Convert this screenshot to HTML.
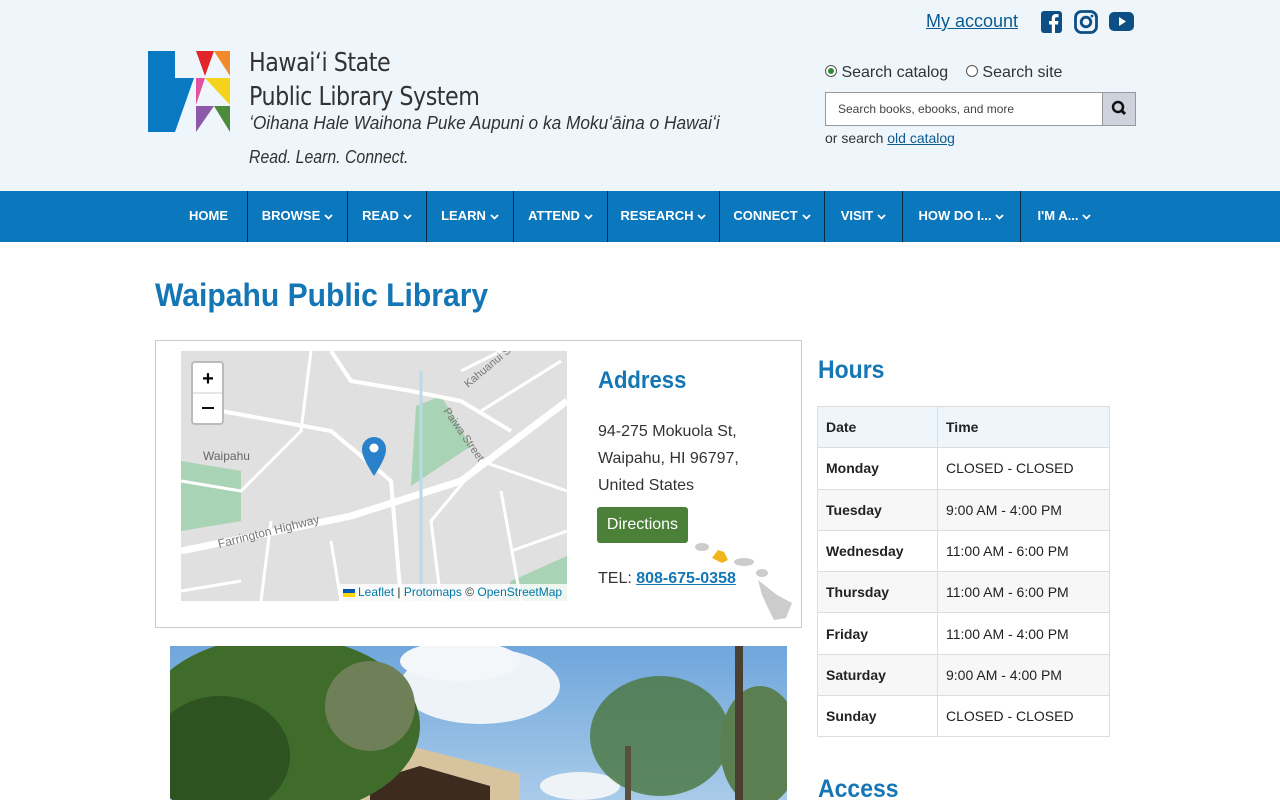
<!DOCTYPE html>
<html><head><meta charset="utf-8"><style>
*{margin:0;padding:0;box-sizing:border-box}
body{width:1280px;height:800px;overflow:hidden;font-family:"Liberation Sans",sans-serif;background:#fff;position:relative;color:#222}
.a{position:absolute}
#hdr{left:0;top:0;width:1280px;height:191px;background:#eef6fb}
#nav{left:0;top:191px;width:1280px;height:51px;background:#0b77bd}
.ni{position:absolute;top:0;height:51px;line-height:49px;color:#fff;font-weight:bold;font-size:13px;text-align:center;border-left:1px solid #0a2a44}
.ni svg{vertical-align:middle;margin-left:4px}
table{border-collapse:collapse;font-size:14px}
td{border:1px solid #ddd;height:41.3px;padding:0 8px}
.h{font-weight:bold;color:#1576b6;transform-origin:0 0;white-space:nowrap}
</style></head><body>
<div id="hdr" class="a"></div>
<svg class="a" style="left:148px;top:51px" width="82" height="82" viewBox="0 0 82 82">
<path d="M0 0H27V27H46L27 81H0Z" fill="#0a79c4"/>
<path d="M48 0H66L57 25Z" fill="#e2242b"/><path d="M66 0H82V25Z" fill="#f08a2a"/>
<path d="M57 27L48 27 48 54Z" fill="#e3529e"/><path d="M57 27H82V54Z" fill="#f3d31b"/>
<path d="M48 55H66L48 81Z" fill="#8c5aa6"/><path d="M66 55H82V81Z" fill="#4d8b3c"/>
</svg>
<div class="a" style="left:249px;top:46px;font-size:26px;line-height:34px;color:#333;font-family:'DejaVu Sans Condensed',sans-serif;letter-spacing:-0.5px;transform:scaleX(0.95);transform-origin:0 0;white-space:nowrap">Hawaiʻi State<br>Public Library System</div>
<div class="a" style="left:249px;top:113px;font-size:18px;font-style:italic;color:#333;transform:scaleX(0.96);transform-origin:0 0;white-space:nowrap">ʻOihana Hale Waihona Puke Aupuni o ka Mokuʻāina o Hawaiʻi</div>
<div class="a" style="left:249px;top:147px;font-size:18px;font-style:italic;color:#333;transform:scaleX(0.88);transform-origin:0 0">Read. Learn. Connect.</div>
<div class="a" style="left:926px;top:11px;font-size:18px;color:#0b5a92;text-decoration:underline">My account</div>
<svg class="a" style="left:1041px;top:11px" width="22" height="22"><rect width="21" height="22" rx="3" fill="#0d4f84"/><path d="M14 22V13.5H17L17.4 10H14V8C14 7 14.3 6.3 15.8 6.3H17.5V3.2C17.2 3.2 16.2 3 15 3 12.5 3 10.8 4.5 10.8 7.3V10H8V13.5H10.8V22Z" fill="#fff"/></svg>
<svg class="a" style="left:1074px;top:10px" width="24" height="24"><rect x="1.5" y="1.5" width="21" height="21" rx="6" fill="none" stroke="#0d4f84" stroke-width="2.8"/><circle cx="12" cy="12" r="4.8" fill="none" stroke="#0d4f84" stroke-width="2.8"/><circle cx="18" cy="6" r="1.4" fill="#0d4f84"/></svg>
<svg class="a" style="left:1109px;top:12px" width="25" height="20"><rect width="25" height="19" rx="5" fill="#0d4f84"/><path d="M10 5V14L17 9.5Z" fill="#fff"/></svg>
<div class="a" style="left:825px;top:64px;font-size:16px;color:#333"><span style="display:inline-block;width:12px;height:12px;border:1px solid #555;border-radius:50%;vertical-align:0px;position:relative;background:#fff"><span style="position:absolute;left:2px;top:2px;width:6px;height:6px;border-radius:50%;background:#2f8a3a"></span></span> Search catalog &nbsp;&nbsp;&nbsp;<span style="display:inline-block;width:12px;height:12px;border:1px solid #555;border-radius:50%;vertical-align:0px;background:#fff"></span> Search site</div>
<div class="a" style="left:825px;top:92px;width:311px;height:34px;border:1px solid #999;background:#fff"><span style="position:absolute;left:12px;top:9px;font-size:12px;color:#444">Search books, ebooks, and more</span>
<div style="position:absolute;right:0;top:0;width:33px;height:32px;background:#cdd2dd;border-left:1px solid #999"><svg width="33" height="32"><circle cx="15" cy="14" r="5" fill="none" stroke="#111" stroke-width="2.5"/><path d="M18.5 17.5L22 21" stroke="#111" stroke-width="3"/></svg></div></div>
<div class="a" style="left:825px;top:130px;font-size:14px;color:#333">or search <span style="color:#0b5a92;text-decoration:underline">old catalog</span></div>
<div id="nav" class="a">
<div class="ni" style="left:170px;width:77px;border:none">HOME</div>
<div class="ni" style="left:247px;width:100px">BROWSE<svg width="9" height="6"><path d="M1 1L4.5 4.5 8 1" stroke="#fff" stroke-width="1.8" fill="none"/></svg></div>
<div class="ni" style="left:347px;width:79px">READ<svg width="9" height="6"><path d="M1 1L4.5 4.5 8 1" stroke="#fff" stroke-width="1.8" fill="none"/></svg></div>
<div class="ni" style="left:426px;width:87px">LEARN<svg width="9" height="6"><path d="M1 1L4.5 4.5 8 1" stroke="#fff" stroke-width="1.8" fill="none"/></svg></div>
<div class="ni" style="left:513px;width:94px">ATTEND<svg width="9" height="6"><path d="M1 1L4.5 4.5 8 1" stroke="#fff" stroke-width="1.8" fill="none"/></svg></div>
<div class="ni" style="left:607px;width:112px">RESEARCH<svg width="9" height="6"><path d="M1 1L4.5 4.5 8 1" stroke="#fff" stroke-width="1.8" fill="none"/></svg></div>
<div class="ni" style="left:719px;width:105px">CONNECT<svg width="9" height="6"><path d="M1 1L4.5 4.5 8 1" stroke="#fff" stroke-width="1.8" fill="none"/></svg></div>
<div class="ni" style="left:824px;width:78px">VISIT<svg width="9" height="6"><path d="M1 1L4.5 4.5 8 1" stroke="#fff" stroke-width="1.8" fill="none"/></svg></div>
<div class="ni" style="left:902px;width:118px">HOW DO I...<svg width="9" height="6"><path d="M1 1L4.5 4.5 8 1" stroke="#fff" stroke-width="1.8" fill="none"/></svg></div>
<div class="ni" style="left:1020px;width:88px">I'M A...<svg width="9" height="6"><path d="M1 1L4.5 4.5 8 1" stroke="#fff" stroke-width="1.8" fill="none"/></svg></div>
</div>
<div class="a h" style="left:155px;top:277px;font-size:32px;transform:scaleX(0.94)">Waipahu Public Library</div>
<div class="a" style="left:155px;top:340px;width:647px;height:288px;border:1px solid #ccc"></div>
<svg class="a" style="left:181px;top:351px" width="386" height="250" viewBox="0 0 386 250">
<rect width="386" height="250" fill="#e0e0e0"/>
<path d="M0 110L0 180 60 170 60 120Z" fill="#a9d3b5"/>
<path d="M235 55L260 45 290 95 230 135Z" fill="#a9d3b5"/>
<path d="M330 230L386 205 386 250 320 250Z" fill="#a9d3b5"/>
<g stroke="#fff" fill="none">
<path d="M0 200L170 165 280 130 386 50" stroke-width="7"/>
<path d="M40 60L150 80 210 130 220 250" stroke-width="4"/>
<path d="M150 0L170 30 230 40 280 50 330 80" stroke-width="4"/>
<path d="M0 130L60 140 120 80 130 0" stroke-width="3"/>
<path d="M260 250L250 170 300 110 386 140" stroke-width="3"/>
<path d="M280 20L320 0M300 60L380 10M80 250L90 170M0 240L60 230M330 200L386 180M160 250L150 190M320 140L340 250" stroke-width="3"/>
</g>
<path d="M240 20V250" stroke="#b9dbe6" stroke-width="3"/>
<text x="22" y="109" font-size="12" fill="#666" font-family="Liberation Sans">Waipahu</text>
<text x="38" y="197" font-size="12" fill="#777" font-family="Liberation Sans" transform="rotate(-14 38 197)">Farrington Highway</text>
<text x="262" y="60" font-size="11" fill="#777" font-family="Liberation Sans" transform="rotate(55 262 60)">Paiwa Street</text>
<text x="287" y="37" font-size="11" fill="#777" font-family="Liberation Sans" transform="rotate(-40 287 37)">Kahuanui St</text>
<path d="M193 125C182 108 181 102 181 98A12 12 0 0 1 205 98C205 102 204 108 193 125Z" fill="#2a81cb"/>
<circle cx="193" cy="97" r="4.5" fill="#fff"/>
<rect x="11" y="11" width="31" height="62" rx="3" fill="#fff" stroke="#bbb" stroke-width="2"/>
<path d="M12 42H41" stroke="#ccc"/>
<text x="27" y="34" font-size="20" font-weight="bold" text-anchor="middle" font-family="Liberation Sans">+</text>
<path d="M21 57H33" stroke="#111" stroke-width="2"/>
<rect x="158" y="233" width="228" height="17" fill="rgba(255,255,255,0.8)"/>
<rect x="162" y="238" width="12" height="4" fill="#0057b7"/><rect x="162" y="242" width="12" height="4" fill="#ffd700"/>
<text x="177" y="245" font-size="12" fill="#0078a8" font-family="Liberation Sans">Leaflet <tspan fill="#333">|</tspan> Protomaps <tspan fill="#333">©</tspan> OpenStreetMap</text>
</svg>
<div class="a h" style="left:598px;top:367px;font-size:24px;transform:scaleX(0.92)">Address</div>
<div class="a" style="left:598px;top:418px;font-size:16px;line-height:27px;color:#333">94-275 Mokuola St,<br>Waipahu, HI 96797,<br>United States</div>
<svg class="a" style="left:682px;top:540px" width="112" height="82"><g fill="#ccc"><ellipse cx="20" cy="7" rx="7" ry="4"/><ellipse cx="62" cy="22" rx="10" ry="4"/><ellipse cx="80" cy="33" rx="6" ry="4"/><path d="M76 40L95 55 110 63 104 78 92 80 86 68 80 55Z"/></g><path d="M30 18L36 10 42 12 46 20 40 23Z" fill="#f1b51c"/></svg>
<div class="a" style="left:597px;top:507px;width:91px;height:36px;background:#4a8038;border-radius:3px;color:#fff;font-size:16px;line-height:35px;text-align:center">Directions</div>
<div class="a" style="left:598px;top:570px;font-size:16px;color:#333">TEL: <span style="color:#1576b6;font-weight:bold;text-decoration:underline">808-675-0358</span></div>
<div class="a h" style="left:818px;top:356px;font-size:25px;transform:scaleX(0.92)">Hours</div>
<table class="a" style="left:817px;top:406px;width:293px">
<tr style="background:#eef6fb;font-weight:bold"><td style="width:120px">Date</td><td>Time</td></tr>
<tr><td><b>Monday</b></td><td>CLOSED - CLOSED</td></tr>
<tr style="background:#f7f7f7"><td><b>Tuesday</b></td><td>9:00 AM - 4:00 PM</td></tr>
<tr><td><b>Wednesday</b></td><td>11:00 AM - 6:00 PM</td></tr>
<tr style="background:#f7f7f7"><td><b>Thursday</b></td><td>11:00 AM - 6:00 PM</td></tr>
<tr><td><b>Friday</b></td><td>11:00 AM - 4:00 PM</td></tr>
<tr style="background:#f7f7f7"><td><b>Saturday</b></td><td>9:00 AM - 4:00 PM</td></tr>
<tr><td><b>Sunday</b></td><td>CLOSED - CLOSED</td></tr>
</table>
<div class="a h" style="left:818px;top:775px;font-size:25px;transform:scaleX(0.92)">Access</div>
<svg class="a" style="left:170px;top:646px" width="617" height="154" viewBox="0 0 617 154">
<defs><linearGradient id="sky" x1="0" y1="0" x2="0" y2="1"><stop offset="0" stop-color="#6fa6dc"/><stop offset="1" stop-color="#a9cbe9"/></linearGradient></defs>
<rect width="617" height="154" fill="url(#sky)"/>
<ellipse cx="310" cy="40" rx="80" ry="38" fill="#eef3f8"/>
<ellipse cx="290" cy="15" rx="60" ry="20" fill="#f4f7fa"/>
<ellipse cx="410" cy="140" rx="40" ry="14" fill="#eef3f8"/>
<path d="M190 120L240 100 350 128 350 154H190Z" fill="#d7c39d"/>
<path d="M200 135L250 120 320 140 320 154H200Z" fill="#3d2b1f"/>
<ellipse cx="110" cy="80" rx="140" ry="90" fill="#3f6b2b"/>
<ellipse cx="50" cy="110" rx="70" ry="60" fill="#2e5220"/>
<ellipse cx="200" cy="60" rx="45" ry="45" fill="#6f8058"/>
<ellipse cx="490" cy="90" rx="70" ry="60" fill="#4d7a46" opacity="0.85"/>
<ellipse cx="590" cy="100" rx="40" ry="60" fill="#5c7f52"/>
<rect x="565" y="0" width="8" height="154" fill="#4a4032"/>
<rect x="455" y="100" width="6" height="54" fill="#5a4f3e"/>
</svg>
</body></html>
